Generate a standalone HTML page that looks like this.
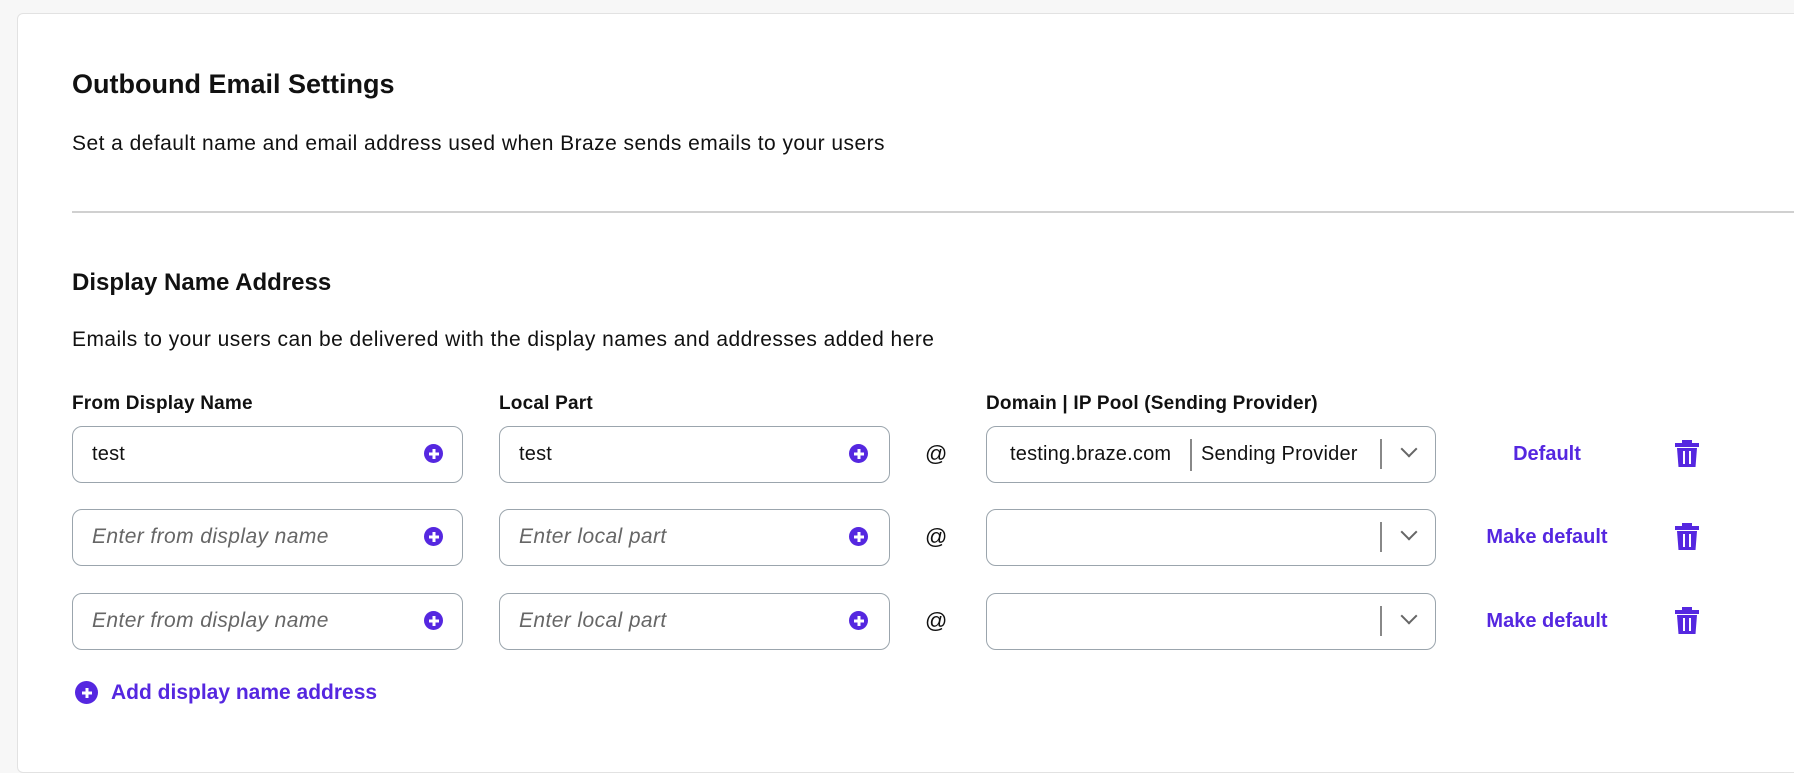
<!DOCTYPE html>
<html><head><style>
*{box-sizing:border-box;margin:0;padding:0}
body{width:1794px;height:743px;background:#f7f7f7;font-family:"Liberation Sans",sans-serif;color:#111;position:relative;overflow:hidden}
.card{position:absolute;left:17px;top:13px;width:1800px;height:760px;background:#fff;border:1px solid #e2e2e2;border-radius:6px}
.a{position:absolute;white-space:nowrap}
h1{font-size:27px;font-weight:bold}
h2{font-size:24px;font-weight:bold}
.p{font-size:21px;letter-spacing:0.45px}
.lbl{font-size:19px;font-weight:bold;letter-spacing:0.2px}
.in{position:absolute;height:57px;border:1.5px solid #9ba5ad;border-radius:10px;background:#fff}
.in span{position:absolute;left:19px;top:0;line-height:54px;font-size:20px;letter-spacing:0.2px}
.in span.ph{font-style:italic;color:#666;font-size:21px;letter-spacing:0.4px}
.plus{position:absolute;width:19px;height:19px;border-radius:50%;background:#5527e0}
.plus:before,.plus:after{content:"";position:absolute;background:#fff;left:50%;top:50%;transform:translate(-50%,-50%)}
.plus:before{width:10px;height:3px}.plus:after{width:3px;height:10px}
.at{position:absolute;font-size:22px}
.sep{position:absolute;width:1.5px;height:30px;background:#888;top:12px}
.chev{position:absolute;top:16px;width:12px;height:12px;border-right:2px solid #666;border-bottom:2px solid #666;transform:rotate(45deg)}
.link{position:absolute;color:#5527e0;font-weight:bold;font-size:20px}
.lc{width:200px;text-align:center;left:1447px}
</style></head><body>
<div class="card"></div>
<h1 class="a" style="left:72px;top:69px">Outbound Email Settings</h1>
<div class="a p" style="left:72px;top:132px">Set a default name and email address used when Braze sends emails to your users</div>
<div class="a" style="left:72px;top:211px;width:1730px;height:2px;background:#d0d0d0"></div>
<h2 class="a" style="left:72px;top:269px">Display Name Address</h2>
<div class="a p" style="left:72px;top:328px">Emails to your users can be delivered with the display names and addresses added here</div>
<div class="a lbl" style="left:72px;top:393px">From Display Name</div>
<div class="a lbl" style="left:499px;top:393px">Local Part</div>
<div class="a lbl" style="left:986px;top:393px">Domain | IP Pool (Sending Provider)</div>

<!-- row1 -->
<div class="in" style="left:72px;top:426px;width:391px"><span>test</span><div class="plus" style="left:351px;top:17px"></div></div>
<div class="in" style="left:499px;top:426px;width:391px"><span>test</span><div class="plus" style="left:349px;top:17px"></div></div>
<div class="at" style="left:925px;top:441px">@</div>
<div class="in" style="left:986px;top:426px;width:450px"><span style="left:23px">testing.braze.com</span><div class="sep" style="left:203px;height:32px"></div><span style="left:214px">Sending Provider</span><div class="sep" style="left:393px"></div><div class="chev" style="left:416px"></div></div>
<div class="link lc" style="top:443px">Default</div>

<!-- row2 -->
<div class="in" style="left:72px;top:509px;width:391px"><span class="ph">Enter from display name</span><div class="plus" style="left:351px;top:17px"></div></div>
<div class="in" style="left:499px;top:509px;width:391px"><span class="ph">Enter local part</span><div class="plus" style="left:349px;top:17px"></div></div>
<div class="at" style="left:925px;top:524px">@</div>
<div class="in" style="left:986px;top:509px;width:450px"><div class="sep" style="left:393px"></div><div class="chev" style="left:416px"></div></div>
<div class="link lc" style="top:526px">Make default</div>

<!-- row3 -->
<div class="in" style="left:72px;top:593px;width:391px"><span class="ph">Enter from display name</span><div class="plus" style="left:351px;top:17px"></div></div>
<div class="in" style="left:499px;top:593px;width:391px"><span class="ph">Enter local part</span><div class="plus" style="left:349px;top:17px"></div></div>
<div class="at" style="left:925px;top:608px">@</div>
<div class="in" style="left:986px;top:593px;width:450px"><div class="sep" style="left:393px"></div><div class="chev" style="left:416px"></div></div>
<div class="link lc" style="top:610px">Make default</div>

<!-- trash icons -->
<svg class="a" style="left:1675px;top:440px" width="24" height="28" viewBox="0 0 24 28"><rect x="7" y="0" width="10" height="3" fill="#5527e0"/><rect x="0" y="3" width="24" height="4" fill="#5527e0"/><path d="M2 8h20l-1.5 19h-17z" fill="#5527e0"/><rect x="8" y="11" width="2" height="13" fill="#fff"/><rect x="14" y="11" width="2" height="13" fill="#fff"/></svg>
<svg class="a" style="left:1675px;top:523px" width="24" height="28" viewBox="0 0 24 28"><rect x="7" y="0" width="10" height="3" fill="#5527e0"/><rect x="0" y="3" width="24" height="4" fill="#5527e0"/><path d="M2 8h20l-1.5 19h-17z" fill="#5527e0"/><rect x="8" y="11" width="2" height="13" fill="#fff"/><rect x="14" y="11" width="2" height="13" fill="#fff"/></svg>
<svg class="a" style="left:1675px;top:607px" width="24" height="28" viewBox="0 0 24 28"><rect x="7" y="0" width="10" height="3" fill="#5527e0"/><rect x="0" y="3" width="24" height="4" fill="#5527e0"/><path d="M2 8h20l-1.5 19h-17z" fill="#5527e0"/><rect x="8" y="11" width="2" height="13" fill="#fff"/><rect x="14" y="11" width="2" height="13" fill="#fff"/></svg>

<div class="plus" style="left:75px;top:681px;width:23px;height:23px"></div>
<div class="link" style="left:111px;top:681px;font-size:21px">Add display name address</div>
</body></html>
